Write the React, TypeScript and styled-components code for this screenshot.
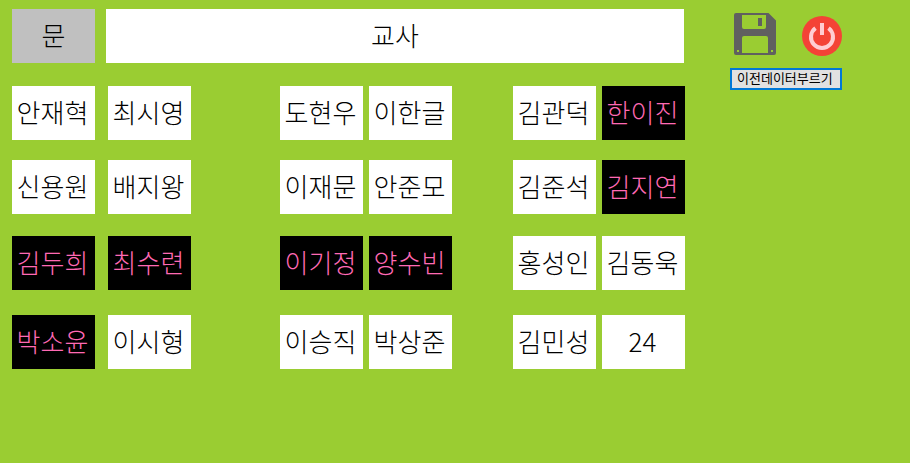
import React from "react";
import styled, { createGlobalStyle } from "styled-components";

const GlobalStyle = createGlobalStyle`
  *, *::before, *::after { box-sizing: border-box; }
  body {
    margin: 0;
    background: #9acd32;
    color: #000;
    font-family: "Noto Sans CJK KR", sans-serif;
    font-weight: 300;
  }
`;

const Page = styled.main`
  display: flex;
  align-items: flex-start;
  gap: 45px;
  padding: 9px 68px 12px 12px;
`;

const Room = styled.section`
  flex: 1;
  min-width: 0;
`;

const Front = styled.header`
  display: flex;
  gap: 11px;
  margin: 0 1px 23px 0;
`;

const Plate = styled.div`
  height: 54px;
  padding-bottom: 2px;
  font-size: 26px;
  line-height: 52px;
  text-align: center;
  white-space: nowrap;
`;

const Door = styled(Plate)`
  flex: 83 1 0;
  background: #c0c0c0;
`;

const Teacher = styled(Plate)`
  flex: 578 1 0;
  background: #fff;
`;

const SeatRow = styled.div<{ $after: number }>`
  display: flex;
  margin-bottom: ${(p) => p.$after}px;

  > :nth-child(2) { margin-left: 13px; }
  > :nth-child(3) { margin-left: 89px; }
  > :nth-child(5) { margin-left: 61px; }
  > :nth-child(4),
  > :nth-child(6) { margin-left: 6px; }
`;

const Seat = styled.button<{ $dark: boolean }>`
  flex: 1 1 0;
  min-width: 0;
  height: 54px;
  padding: 0 2px 2px 0;
  border: 0;
  background: ${(p) => (p.$dark ? "#000" : "#fff")};
  color: ${(p) => (p.$dark ? "#ff69b4" : "#000")};
  font: inherit;
  font-size: 26px;
  line-height: 52px;
  white-space: nowrap;
`;

const Side = styled.aside`
  display: flex;
  flex-direction: column;
  gap: 12px;
  width: 112px;
  padding-top: 3px;
`;

const Tools = styled.div`
  display: flex;
  justify-content: space-between;
  padding-left: 4px;
`;

const IconButton = styled.button`
  display: block;
  padding: 0;
  border: 0;
  background: none;

  svg { display: block; }
`;

const LoadButton = styled.button`
  display: flex;
  align-items: center;
  height: 22px;
  padding: 0 5px 2px;
  border: 2px solid #0078d7;
  background: #e1e1e1;
  color: #000;
  font: inherit;
  font-size: 13px;
  font-weight: 400;
  line-height: 16px;
  white-space: nowrap;
`;

type Person = { name: string; dark?: boolean };

const rows: { after: number; seats: Person[] }[] = [
  {
    after: 20,
    seats: [
      { name: "안재혁" },
      { name: "최시영" },
      { name: "도현우" },
      { name: "이한글" },
      { name: "김관덕" },
      { name: "한이진", dark: true },
    ],
  },
  {
    after: 22,
    seats: [
      { name: "신용원" },
      { name: "배지왕" },
      { name: "이재문" },
      { name: "안준모" },
      { name: "김준석" },
      { name: "김지연", dark: true },
    ],
  },
  {
    after: 25,
    seats: [
      { name: "김두희", dark: true },
      { name: "최수련", dark: true },
      { name: "이기정", dark: true },
      { name: "양수빈", dark: true },
      { name: "홍성인" },
      { name: "김동욱" },
    ],
  },
  {
    after: 0,
    seats: [
      { name: "박소윤", dark: true },
      { name: "이시형" },
      { name: "이승직" },
      { name: "박상준" },
      { name: "김민성" },
      { name: "24" },
    ],
  },
];

function FloppyIcon() {
  return (
    <svg width="42" height="44" viewBox="0 -1 42 44" aria-hidden="true">
      <path
        fill="#606060"
        fillRule="evenodd"
        d="M2 0H34.5L42 7.500V40a2 2 0 0 1-2 2H2a2 2 0 0 1-2-2V2a2 2 0 0 1 2-2Z
           M8 2V14a2 2 0 0 0 2 2H30a2 2 0 0 0 2-2V2Z
           M24 5H28V13H24Z
           M10 23a2 2 0 0 0-2 2V40H34V25a2 2 0 0 0-2-2Z
           M3 37V39H5V37Z
           M37 37V39H39V37Z"
      />
    </svg>
  );
}

function PowerIcon() {
  return (
    <svg width="42" height="44" viewBox="0 0 42 44" aria-hidden="true">
      <circle cx="22" cy="24" r="20" fill="#f44336" />
      <path
        d="M15.500 16.200A11 11 0 1 0 28.500 16.200"
        fill="none"
        stroke="#ffcdd2"
        strokeWidth="4"
      />
      <path d="M20 11H24V23H20Z" fill="#ffcdd2" />
    </svg>
  );
}

export default function App() {
  return (
    <>
      <GlobalStyle />
      <Page>
        <Room>
          <Front>
            <Door>문</Door>
            <Teacher>교사</Teacher>
          </Front>
          {rows.map((row) => (
            <SeatRow key={row.seats[0].name} $after={row.after}>
              {row.seats.map((seat) => (
                <Seat key={seat.name} type="button" $dark={!!seat.dark}>
                  {seat.name}
                </Seat>
              ))}
            </SeatRow>
          ))}
        </Room>
        <Side>
          <Tools>
            <IconButton type="button" aria-label="저장">
              <FloppyIcon />
            </IconButton>
            <IconButton type="button" aria-label="종료">
              <PowerIcon />
            </IconButton>
          </Tools>
          <LoadButton type="button">이전데이터부르기</LoadButton>
        </Side>
      </Page>
    </>
  );
}
